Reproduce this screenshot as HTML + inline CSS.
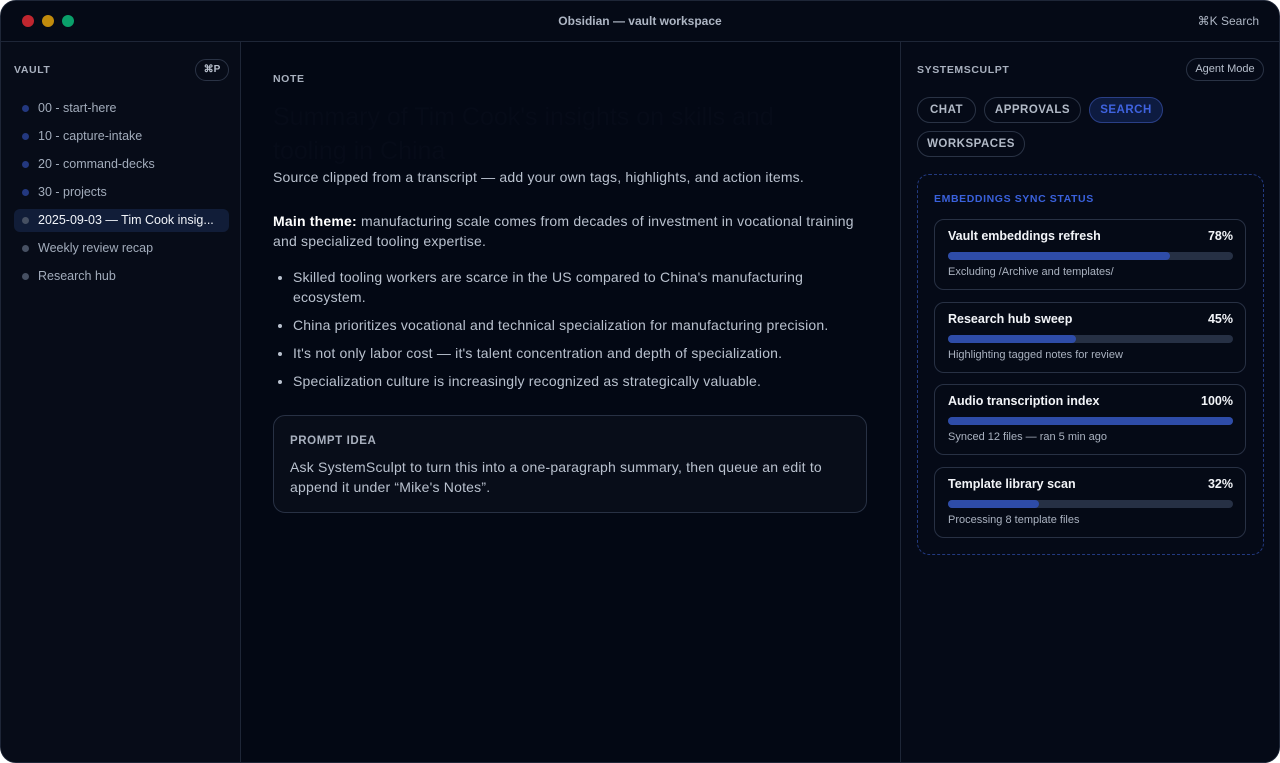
<!DOCTYPE html>
<html><head><meta charset="utf-8"><style>
*{box-sizing:border-box;margin:0;padding:0}
html,body{width:1280px;height:763px;background:#fff;overflow:hidden;font-family:"Liberation Sans",sans-serif}
.win{position:absolute;left:0;top:0;width:1280px;height:763px;border-radius:16px;background:#030814;border:1px solid #1e2637;overflow:hidden}
.tb{height:41px;border-bottom:1px solid #1e2637;background:#050a16;position:relative}
.dot{position:absolute;top:14px;width:12px;height:12px;border-radius:50%}
.tt{position:absolute;left:0;right:0;top:13px;text-align:center;color:#aeb6c4;font-size:12px;font-weight:bold}
.ks{position:absolute;right:20px;top:13px;color:#aeb6c4;font-size:12px}
.side{position:absolute;left:0;top:41px;width:240px;bottom:0;background:#070c18;border-right:1px solid #1e2637}
.lab{font-size:10.5px;font-weight:bold;letter-spacing:.6px;color:#a9b1bf}
.pill{position:absolute;border:1px solid #2a3345;border-radius:12px;color:#b7bfcc;font-size:10px;text-align:center}
.item{position:absolute;left:13px;width:215px;height:23px;font-size:12.5px;color:#a2acbb;line-height:23px;padding-left:24px;border-radius:6px}
.item i{position:absolute;left:8px;top:8px;width:7px;height:7px;border-radius:50%;background:#23387f}
.item.g i{background:#465062}
.item.sel{background:#111d38;color:#f0f3f8}
.main{position:absolute;left:240px;top:41px;width:658px;bottom:0}
.main p,.main ul{color:#b9c1ce;font-size:14px;line-height:20px;letter-spacing:.2px}
.right{position:absolute;left:899px;top:41px;right:0;bottom:0;border-left:1px solid #1e2637;background:#050a17}
.tab{position:absolute;height:26px;border:1px solid #2a3345;border-radius:13px;color:#b2bac7;font-size:11.5px;font-weight:bold;letter-spacing:.5px;line-height:24px;text-align:center}
.card{position:absolute;left:16px;width:312px;height:71px;border:1px solid #283144;border-radius:10px;background:#050a16}
.card b{position:absolute;left:13px;top:9px;color:#f2f4f8;font-size:12.5px}
.card .p{position:absolute;right:12px;top:9px;color:#f2f4f8;font-size:12.5px;font-weight:bold}
.bar{position:absolute;left:13px;right:12px;top:32px;height:8px;border-radius:4px;background:#263044}
.bar div{height:8px;border-radius:4px;background:#2e4ca8}
.card span{position:absolute;left:13px;top:46px;color:#aab2c0;font-size:11px}
</style></head><body><div class="win">
<div class="tb"><div class="dot" style="left:21px;background:#c0262f"></div><div class="dot" style="left:41px;background:#c18b0c"></div><div class="dot" style="left:61px;background:#0aa06a"></div>
<div class="tt">Obsidian — vault workspace</div><div class="ks">⌘K Search</div></div>
<div class="side">
<div class="lab" style="position:absolute;left:13px;top:22px">VAULT</div>
<div class="pill" style="left:194px;top:17px;width:34px;height:22px;line-height:20px;font-weight:bold">⌘P</div>
<div class="item" style="top:55px"><i></i>00 - start-here</div>
<div class="item" style="top:83px"><i></i>10 - capture-intake</div>
<div class="item" style="top:111px"><i></i>20 - command-decks</div>
<div class="item" style="top:139px"><i></i>30 - projects</div>
<div class="item sel g" style="top:167px"><i></i>2025-09-03 — Tim Cook insig...</div>
<div class="item g" style="top:195px"><i></i>Weekly review recap</div>
<div class="item g" style="top:223px"><i></i>Research hub</div>
</div>
<div class="main">
<div class="lab" style="position:absolute;left:32px;top:31px">NOTE</div>
<div style="position:absolute;left:32px;top:58px;width:580px;color:#060b18;font-size:25px;line-height:34px">Summary of Tim Cook's insights on skills and tooling in China</div>
<p style="position:absolute;left:32px;top:125px">Source clipped from a transcript — add your own tags, highlights, and action items.</p>
<p style="position:absolute;left:32px;top:169px;width:590px"><b style="color:#fff">Main theme:</b> manufacturing scale comes from decades of investment in vocational training and specialized tooling expertise.</p>
<ul style="position:absolute;left:52px;top:225px;width:545px">
<li style="margin-bottom:8px">Skilled tooling workers are scarce in the US compared to China's manufacturing ecosystem.</li>
<li style="margin-bottom:8px">China prioritizes vocational and technical specialization for manufacturing precision.</li>
<li style="margin-bottom:8px">It's not only labor cost — it's talent concentration and depth of specialization.</li>
<li>Specialization culture is increasingly recognized as strategically valuable.</li></ul>
<div style="position:absolute;left:32px;top:373px;width:594px;height:98px;border:1px solid #283144;border-radius:12px;background:#080d19">
<div class="lab" style="position:absolute;left:16px;top:19px;font-size:11.5px">PROMPT IDEA</div>
<p style="position:absolute;left:16px;top:41px;width:560px">Ask SystemSculpt to turn this into a one-paragraph summary, then queue an edit to append it under “Mike's Notes”.</p></div>
</div>
<div class="right">
<div class="lab" style="position:absolute;left:16px;top:22px">SYSTEMSCULPT</div>
<div class="pill" style="left:285px;top:16px;width:78px;height:23px;line-height:21px;font-size:11px">Agent Mode</div>
<div class="tab" style="left:16px;top:55px;width:59px">CHAT</div>
<div class="tab" style="left:83px;top:55px;width:97px">APPROVALS</div>
<div class="tab" style="left:188px;top:55px;width:74px;background:#0d1b40;border-color:#2a3f86;color:#3f63e0">SEARCH</div>
<div class="tab" style="left:16px;top:89px;width:108px">WORKSPACES</div>
<div style="position:absolute;left:16px;top:132px;width:347px;height:381px;border:1px dashed #233a80;border-radius:12px">
<div class="lab" style="position:absolute;left:16px;top:18px;color:#3a61dc;font-size:10.5px">EMBEDDINGS SYNC STATUS</div>
<div class="card" style="top:44px"><b>Vault embeddings refresh</b><div class="p">78%</div><div class="bar"><div style="width:78%"></div></div><span>Excluding /Archive and templates/</span></div>
<div class="card" style="top:127px"><b>Research hub sweep</b><div class="p">45%</div><div class="bar"><div style="width:45%"></div></div><span>Highlighting tagged notes for review</span></div>
<div class="card" style="top:209px"><b>Audio transcription index</b><div class="p">100%</div><div class="bar"><div style="width:100%"></div></div><span>Synced 12 files — ran 5 min ago</span></div>
<div class="card" style="top:292px"><b>Template library scan</b><div class="p">32%</div><div class="bar"><div style="width:32%"></div></div><span>Processing 8 template files</span></div>
</div></div>
</div></body></html>
